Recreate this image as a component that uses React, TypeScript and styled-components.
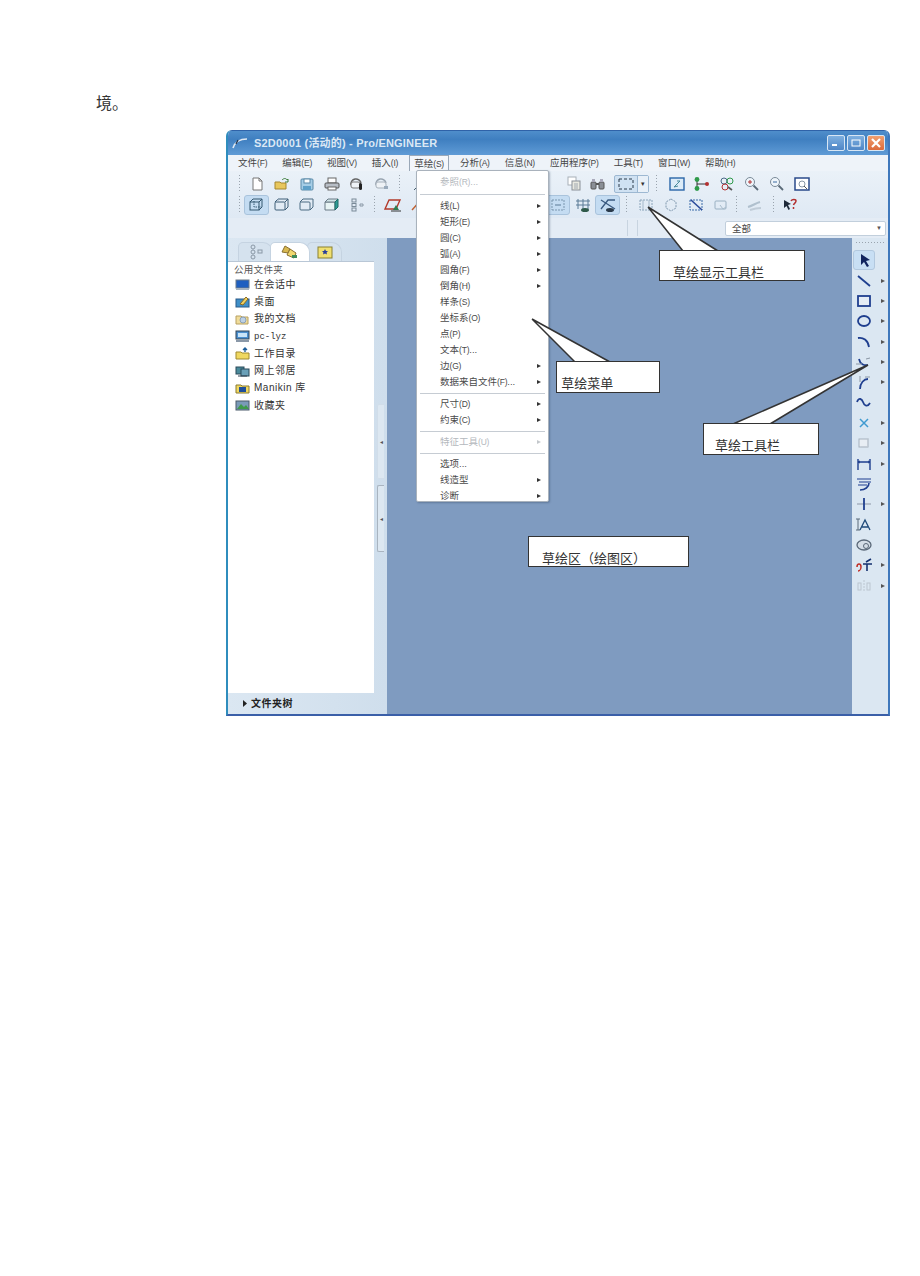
import React from "react";
import styled, { createGlobalStyle, css } from "styled-components";

const CJK = `"Liberation Sans", "Noto Sans CJK SC", sans-serif`;
const SERIF = `"Liberation Serif", "Noto Sans CJK SC", serif`;

const Global = createGlobalStyle`
  html, body { margin: 0; padding: 0; background: #fff; }
  body { font-family: ${SERIF}; color: #222; }
`;

const Page = styled.div`
  width: 920px;
  height: 1276px;
  padding-top: 94px;
  box-sizing: border-box;
  overflow: hidden;
`;

const Paragraph = styled.p`
  margin: 0 0 17px 96px;
  height: 19px;
  font: 16px/19px ${SERIF};
  color: #333;
`;

const Figure = styled.div`
  position: relative;
  margin-left: 226px;
  width: 664px;
  height: 586px;
`;

const Window = styled.div`
  width: 100%;
  height: 100%;
  box-sizing: border-box;
  display: flex;
  flex-direction: column;
  border: 2px solid #3f78bc;
  border-top: 0;
  border-bottom-color: #3a5fa8;
  border-left-color: #2f8dbd;
  border-radius: 6px 6px 0 0;
  background: #dfe9f4;
  overflow: hidden;
`;

const TitleBar = styled.div`
  height: 25px;
  flex: none;
  display: flex;
  align-items: center;
  padding: 0 3px 0 4px;
  background: linear-gradient(#4f8ecb 0%, #3f7fc0 35%, #5f9bd6 100%);
  border-top: 1px solid #2f62a8;
  box-sizing: border-box;
`;

const TitleText = styled.span`
  margin-left: 4px;
  flex: 1;
  font: bold 11px/14px ${CJK};
  color: #dbe8f5;
  letter-spacing: 0.2px;
`;

const Controls = styled.div`
  display: flex;
  gap: 2px;
`;

const Control = styled.div<{ $close?: boolean }>`
  width: 18px;
  height: 16px;
  box-sizing: border-box;
  border: 1px solid #d8e6f4;
  border-radius: 2px;
  display: flex;
  align-items: center;
  justify-content: center;
  background: ${(p) =>
    p.$close
      ? "linear-gradient(#f0a070, #dc6a3a)"
      : "linear-gradient(#7fb0e0, #4f86c6)"};
`;

const MenuBar = styled.div`
  height: 16px;
  flex: none;
  display: flex;
  gap: 15px;
  padding-left: 10px;
  box-sizing: border-box;
  background: #eef3f9;
  font: 9.5px/16px ${CJK};
  color: #444;
`;

const MenuTitle = styled.span<{ $open?: boolean }>`
  white-space: nowrap;
  ${(p) =>
    p.$open &&
    css`
      margin: 0 -4px;
      padding: 0 4px;
      background: #f4f7fb;
      border: 1px solid #9aa8b8;
      border-bottom: 0;
      line-height: 15px;
      box-sizing: border-box;
      height: 16px;
    `}
`;

const Mnemonic = styled.span`
  font-size: 8.5px;
  letter-spacing: -0.2px;
`;

const Toolbars = styled.div`
  height: 47px;
  flex: none;
  display: flex;
  flex-direction: column;
  background: linear-gradient(#eaf1f8, #dfe9f4);
  padding-top: 2px;
  box-sizing: border-box;
`;

const ToolRow = styled.div`
  height: 21px;
  display: flex;
  align-items: center;
  padding-left: 7px;
`;

const Grip = styled.div<{ $gap?: number }>`
  width: 3px;
  height: 19px;
  flex: none;
  margin: 0 ${(p) => p.$gap ?? 4}px;
  background-image: radial-gradient(circle, #9aa4ae 0.8px, transparent 1px);
  background-size: 3px 3px;
`;

const ToolSlot = styled.div<{ $w?: number; $active?: boolean; $dim?: boolean }>`
  width: ${(p) => p.$w ?? 25}px;
  height: 20px;
  flex: none;
  box-sizing: border-box;
  display: flex;
  align-items: center;
  justify-content: center;
  opacity: ${(p) => (p.$dim ? 0.45 : 1)};
  ${(p) =>
    p.$active &&
    css`
      background: #c4dcf2;
      border: 1px solid #a9c3dc;
      border-radius: 3px;
    `}
`;

const Spacer = styled.div<{ $w: number }>`
  width: ${(p) => p.$w}px;
  flex: none;
`;

const SelectGroup = styled.div`
  width: 35px;
  height: 18px;
  flex: none;
  display: flex;
  box-sizing: border-box;
  border: 1px solid #9db8d2;
  background: #cfe1f2;
  border-radius: 2px;
  margin-left: 4px;
`;

const SelectFace = styled.div`
  flex: 1;
  display: flex;
  align-items: center;
  justify-content: center;
`;

const SelectDrop = styled.div`
  width: 10px;
  border-left: 1px solid #9db8d2;
  background: #e8f0f8;
  color: #333;
  font: 7px/16px ${CJK};
  text-align: center;
`;

const FilterRow = styled.div`
  height: 20px;
  flex: none;
  display: flex;
  align-items: center;
  background: #e4ecf5;
  box-sizing: border-box;
  padding-left: 399px;
`;

const FilterRule = styled.div<{ $gap: number }>`
  width: 1px;
  height: 16px;
  background: #c8d4e0;
  margin-right: ${(p) => p.$gap}px;
`;

const Combo = styled.div`
  width: 161px;
  height: 15px;
  box-sizing: border-box;
  display: flex;
  justify-content: space-between;
  align-items: center;
  padding: 0 3px 0 6px;
  border: 1px solid #c2cfdc;
  border-radius: 2px;
  background: #fff;
  font: 9.5px/13px ${CJK};
  color: #444;
`;

const Caret = styled.span`
  font-size: 6px;
  color: #555;
`;

const Workspace = styled.div`
  flex: 1;
  min-height: 0;
  display: flex;
`;

const Navigator = styled.div`
  width: 159px;
  flex: none;
  display: flex;
  flex-direction: column;
  background: linear-gradient(90deg, #dbe7f2, #cfdeec);
`;

const Tabs = styled.div`
  height: 23px;
  flex: none;
  display: flex;
  align-items: flex-end;
  padding: 0 0 0 10px;
  gap: 0;
`;

const Tab = styled.div<{ $active?: boolean }>`
  width: ${(p) => (p.$active ? 40 : 35)}px;
  height: 19px;
  box-sizing: border-box;
  display: flex;
  align-items: center;
  justify-content: center;
  border-radius: 5px 10px 0 0;
  border: 1px solid #c5d3e1;
  border-bottom: 0;
  background: ${(p) => (p.$active ? "#fff" : "#d5e2ee")};
  margin-right: -3px;
  position: relative;
  z-index: ${(p) => (p.$active ? 1 : 0)};
`;

const NavBody = styled.div`
  flex: 1;
  min-height: 0;
  display: flex;
`;

const FolderList = styled.div`
  width: 146px;
  margin-left: 0;
  flex: none;
  background: #fff;
  border-top: 1px solid #b9c7d6;
  border-right: 0;
  box-sizing: border-box;
  padding: 1px 0 0 6px;
`;

const FolderHeader = styled.div`
  height: 13px;
  font: 9.5px/13px ${CJK};
  color: #555;
  letter-spacing: 0.3px;
`;

const FolderRow = styled.div`
  height: 17.3px;
  display: flex;
  align-items: center;
  gap: 4px;
  padding-left: 1px;
  font: 10px/14px ${CJK};
  color: #333;
  letter-spacing: 0.5px;
  white-space: nowrap;
`;

const MonoLabel = styled.span`
  font: 9px/14px "Liberation Mono", "Noto Sans CJK SC", monospace;
  letter-spacing: 0;
`;

const Sash = styled.div`
  width: 13px;
  flex: none;
  display: flex;
  flex-direction: column;
  align-items: center;
  padding-top: 143px;
  box-sizing: border-box;
`;

const SashGrip = styled.div<{ $h: number; $mb?: number; $border?: boolean }>`
  width: 7px;
  height: ${(p) => p.$h}px;
  margin-bottom: ${(p) => p.$mb ?? 0}px;
  flex: none;
  display: flex;
  align-items: center;
  justify-content: center;
  box-sizing: border-box;
  color: #555;
  font-size: 6px;
  line-height: 6px;
  background: #dce7f1;
  border: 1px solid ${(p) => (p.$border ? "#a9b4c0" : "#d1dde9")};
  border-right: 0;
  border-radius: 2px 0 0 2px;
`;

const TreeToggle = styled.div`
  height: 21px;
  flex: none;
  display: flex;
  align-items: center;
  padding-left: 14px;
  gap: 3px;
  font: bold 10px/14px ${CJK};
  color: #222;
  letter-spacing: 0.5px;
`;

const Canvas = styled.div`
  flex: 1;
  background: #7f9bc0;
`;

const SketchTools = styled.div`
  width: 36px;
  flex: none;
  background: #dbe7f2;
  padding: 3px 0 0 1px;
  box-sizing: border-box;
`;

const DottedRule = styled.div`
  height: 3px;
  margin: 0 2px 6px;
  background-image: radial-gradient(circle, #9aa4ae 0.7px, transparent 1px);
  background-size: 3px 3px;
`;

const SketchRow = styled.div`
  height: 20.35px;
  display: flex;
  align-items: center;
`;

const SketchBtn = styled.div<{ $active?: boolean }>`
  width: 22px;
  height: 20px;
  box-sizing: border-box;
  display: flex;
  align-items: center;
  justify-content: center;
  ${(p) =>
    p.$active &&
    css`
      background: #c8dff4;
      border: 1px solid #b2c8de;
      border-radius: 3px;
    `}
`;

const Flyout = styled.span`
  margin-left: 6px;
  width: 0;
  height: 0;
  border-left: 4px solid #555;
  border-top: 2.5px solid transparent;
  border-bottom: 2.5px solid transparent;
`;

const DropMenu = styled.div`
  position: absolute;
  left: 190px;
  top: 40px;
  width: 133px;
  height: 332px;
  box-sizing: border-box;
  padding: 3px 0 0;
  background: #fff;
  border: 1px solid #a9b2bc;
  border-radius: 2px;
  box-shadow: 1px 1px 2px rgba(40, 60, 90, 0.35);
`;

const DropItem = styled.div<{ $dim?: boolean }>`
  height: 16px;
  display: flex;
  align-items: center;
  justify-content: space-between;
  padding: 0 7px 0 23px;
  font: 9.5px/16px ${CJK};
  color: ${(p) => (p.$dim ? "#b4b8bd" : "#4a4a4a")};
  white-space: nowrap;
`;

const DropArrow = styled.span<{ $dim?: boolean }>`
  width: 0;
  height: 0;
  border-left: 4px solid ${(p) => (p.$dim ? "#c4c8cc" : "#333")};
  border-top: 2.5px solid transparent;
  border-bottom: 2.5px solid transparent;
`;

const DropRule = styled.div<{ $h?: number }>`
  height: ${(p) => p.$h ?? 8}px;
  display: flex;
  align-items: center;
  padding: 0 3px;
  &::after {
    content: "";
    flex: 1;
    height: 1px;
    background: #c6ccd3;
  }
`;

const Leaders = styled.svg`
  position: absolute;
  inset: 0;
  pointer-events: none;
`;

const Callout = styled.div<{
  $x: number;
  $y: number;
  $w: number;
  $h: number;
  $pad: number;
}>`
  position: absolute;
  left: ${(p) => p.$x}px;
  top: ${(p) => p.$y}px;
  width: ${(p) => p.$w}px;
  height: ${(p) => p.$h}px;
  box-sizing: border-box;
  padding: 14px 0 0 ${(p) => p.$pad}px;
  background: #fff;
  border: 1.5px solid #333;
  font: 13px/15px ${SERIF};
  color: #333;
  white-space: nowrap;
`;

type IconName =
  | "new" | "open" | "save" | "print" | "mail" | "mail2"
  | "box1" | "box2" | "box3" | "box4" | "axes"
  | "sketch1" | "sketch2" | "pen" | "copy" | "find"
  | "dash" | "refit" | "node" | "zoomAll" | "zoomIn" | "zoomOut" | "frame"
  | "grid" | "gridDim" | "constraint" | "vertex" | "hex" | "diag" | "cube" | "sweep" | "help";

const Ico: React.FC<{ name: IconName }> = ({ name }) => {
  const common = { width: 18, height: 16, viewBox: "0 0 18 16", fill: "none" } as const;
  switch (name) {
    case "new":
      return <svg {...common}><path d="M5 2h6l3 3v9H5z" fill="#fff" stroke="#777" /><path d="M11 2v3h3" stroke="#777" /></svg>;
    case "open":
      return <svg {...common}><path d="M2 13V6h5l1 1h5v6z" fill="#e8c75c" stroke="#a5862e" /><path d="M9 4c2-2 4-2 5 0l1-1v3h-3" stroke="#3d7d3a" /></svg>;
    case "save":
      return <svg {...common}><rect x="3" y="3" width="12" height="11" rx="1" fill="#a6cde6" stroke="#5a8aa8" /><rect x="6" y="3" width="6" height="4" fill="#fff" stroke="#5a8aa8" /><rect x="5" y="10" width="8" height="4" fill="#5fa0c8" /></svg>;
    case "print":
      return <svg {...common}><rect x="5" y="2" width="8" height="5" fill="#fff" stroke="#666" /><rect x="2" y="7" width="14" height="5" rx="1" fill="#b8bec6" stroke="#555" /><rect x="5" y="11" width="8" height="3" fill="#fff" stroke="#666" /></svg>;
    case "mail":
      return <svg {...common}><path d="M3 9a5 5 0 0 1 10-2" stroke="#666" strokeWidth="1.5" /><rect x="3" y="6" width="9" height="6" rx="2" stroke="#777" fill="#eef2f6" /><rect x="11" y="7" width="3" height="7" rx="1.5" fill="#222" /></svg>;
    case "mail2":
      return <svg {...common}><path d="M3 9a5 5 0 0 1 10-2" stroke="#98a4b0" strokeWidth="1.5" /><rect x="3" y="6" width="10" height="6" rx="2" stroke="#a6b0ba" fill="#eef2f6" /><rect x="11" y="10" width="4" height="3" fill="#9ab" /></svg>;
    case "box1":
      return <svg {...common}><rect x="2" y="5" width="9" height="8" stroke="#33566f" /><path d="M2 5l3-3h9v8l-3 3M11 5l3-3" stroke="#33566f" /><path d="M6 4v6h7" stroke="#33566f" strokeDasharray="1.5 1" /></svg>;
    case "box2":
      return <svg {...common}><rect x="2" y="5" width="10" height="8" rx="1" stroke="#3f5f78" /><path d="M2 5l3-3h10v8l-3 3M12 5l3-3" stroke="#3f5f78" /><path d="M5 2v2" stroke="#9ab" /></svg>;
    case "box3":
      return <svg {...common}><rect x="2" y="5" width="10" height="8" rx="1" stroke="#4a6a82" /><path d="M2 5l3-3h10v8l-3 3" stroke="#4a6a82" /></svg>;
    case "box4":
      return <svg {...common}><path d="M2 5h10v8H2z" fill="#e8f4f4" stroke="#6a7a86" /><path d="M2 5l3-3h10l-3 3z" fill="#cfe3e6" stroke="#6a7a86" /><path d="M12 5l3-3v8l-3 3z" fill="#2f9c94" stroke="#1f6c66" /></svg>;
    case "axes":
      return <svg {...common}><rect x="4" y="2" width="4" height="3" stroke="#7a8a98" /><rect x="4" y="6.5" width="4" height="3" stroke="#7a8a98" /><rect x="4" y="11" width="4" height="3" stroke="#7a8a98" /><path d="M12 7h3v2h-3z" stroke="#8a98a6" /></svg>;
    case "sketch1":
      return <svg {...common}><path d="M1 12l4-9h11l-4 9z" stroke="#b33a2a" strokeWidth="1.4" /><path d="M9 13l3-5 3 5z" fill="#2f7d4f" /><path d="M7 14h10" stroke="#333" /></svg>;
    case "sketch2":
      return <svg {...common}><path d="M3 13L12 3" stroke="#c06030" strokeWidth="1.4" /><path d="M12 3l3 1-2 2z" fill="#8a4a20" /></svg>;
    case "pen":
      return <svg {...common}><path d="M3 14l11-11" stroke="#4a6070" /></svg>;
    case "copy":
      return <svg {...common}><rect x="3" y="1" width="8" height="8" fill="#fff" stroke="#a8b0b8" /><rect x="7" y="5" width="8" height="9" fill="#e8e8e0" stroke="#8a9098" /><path d="M9 8h4M9 10h4M9 12h4" stroke="#a0a8b0" /></svg>;
    case "find":
      return <svg {...common}><rect x="2" y="6" width="5" height="7" rx="1" fill="#8a8f96" stroke="#555" /><rect x="10" y="6" width="5" height="7" rx="1" fill="#8a8f96" stroke="#555" /><path d="M7 8h3" stroke="#555" strokeWidth="2" /><rect x="3" y="3" width="3" height="3" fill="#aab" /><rect x="11" y="3" width="3" height="3" fill="#aab" /></svg>;
    case "dash":
      return <svg {...common}><rect x="2" y="3" width="14" height="10" stroke="#2a3a4a" strokeDasharray="3 2" /></svg>;
    case "refit":
      return <svg {...common}><rect x="2" y="2" width="14" height="12" fill="#dcecf8" stroke="#2a66a8" strokeWidth="1.4" /><path d="M6 11l6-6M6 11l4-1M12 5l-3 0" stroke="#4a8a9a" /></svg>;
    case "node":
      return <svg {...common}><path d="M4 4v8M4 8h9" stroke="#333" /><circle cx="4" cy="3.5" r="2.4" fill="#2f9a4a" /><circle cx="4" cy="12.5" r="2.4" fill="#2f9a4a" /><circle cx="14" cy="8" r="2" fill="#b33030" /></svg>;
    case "zoomAll":
      return <svg {...common}><circle cx="6" cy="5" r="3" stroke="#4a6a88" /><circle cx="12" cy="5" r="3" stroke="#2f9a4a" /><circle cx="7" cy="11" r="3" stroke="#b33030" /><path d="M10 11l4 3" stroke="#555" strokeWidth="1.6" /></svg>;
    case "zoomIn":
      return <svg {...common}><circle cx="7" cy="6" r="4.5" fill="#eef5fb" stroke="#7a8a98" /><path d="M5 6h4M7 4v4" stroke="#b03030" /><path d="M10.5 9.5L15 14" stroke="#5a6a78" strokeWidth="1.8" /></svg>;
    case "zoomOut":
      return <svg {...common}><circle cx="7" cy="6" r="4.5" fill="#eef5fb" stroke="#7a8a98" /><path d="M5 6h4" stroke="#3a6aa0" /><path d="M10.5 9.5L15 14" stroke="#5a6a78" strokeWidth="1.8" /></svg>;
    case "frame":
      return <svg {...common}><rect x="2" y="2" width="14" height="12" fill="#fff" stroke="#2a4a8a" strokeWidth="1.5" /><circle cx="9" cy="8" r="3" stroke="#8a98a6" /><path d="M11 10l3 3" stroke="#555" /></svg>;
    case "grid":
      return <svg {...common}><path d="M4 2v10M9 2v10M14 2v10M2 4h14M2 8h14" stroke="#5a7a96" /><ellipse cx="11" cy="13" rx="4" ry="2" fill="#2f5a4a" /></svg>;
    case "gridDim":
      return <svg {...common}><path d="M2 3l14 9M2 12L9 3h7" stroke="#3a5a80" strokeWidth="1.3" /><ellipse cx="11" cy="13" rx="4" ry="2" fill="#2a3a4a" /></svg>;
    case "constraint":
      return <svg {...common}><path d="M3 3l12 0M3 13h12M3 3v10M15 3v10" stroke="#7a96ae" strokeDasharray="2 1" /><path d="M6 8h6" stroke="#5a7a96" /></svg>;
    case "vertex":
      return <svg {...common}><path d="M3 3h12v10H3z" stroke="#8aa4ba" strokeDasharray="2 1" /><path d="M6 3v10M12 3v10" stroke="#a4b8ca" /></svg>;
    case "hex":
      return <svg {...common}><path d="M9 2l5 3v6l-5 3-5-3V5z" stroke="#8098ae" strokeDasharray="2 1" /></svg>;
    case "diag":
      return <svg {...common}><path d="M3 3h12v10H3z" stroke="#3a6aa8" strokeDasharray="2 1" /><path d="M4 3l11 10" stroke="#2a4a9a" strokeWidth="1.6" /></svg>;
    case "cube":
      return <svg {...common}><rect x="3" y="4" width="11" height="8" rx="1" stroke="#9ab0c2" /><path d="M8 8l3 4 3-2" stroke="#a8bccc" /></svg>;
    case "sweep":
      return <svg {...common}><path d="M2 10c4-1 8-4 12-5" stroke="#b0c0ce" strokeWidth="2" /><path d="M4 13c3-1 8-2 11-2" stroke="#c0ccd8" strokeWidth="2" /></svg>;
    case "help":
      return <svg {...common}><path d="M3 3l7 4-3 1 2 4-1.5 1-2-4L3 11z" fill="#1f2a3a" /><path d="M10 4c1-2 5-2 5 0 0 2-2 2-2.5 4M12.5 10v2" stroke="#b33030" strokeWidth="1.5" /></svg>;
  }
};

type Tool = { icon: IconName; active?: boolean; dim?: boolean; w?: number };

const Row: React.FC<{ tools: Tool[] }> = ({ tools }) => (
  <>
    {tools.map((t, i) => (
      <ToolSlot key={i} $active={t.active} $dim={t.dim} $w={t.w}>
        <Ico name={t.icon} />
      </ToolSlot>
    ))}
  </>
);

const menus: [string, string][] = [
  ["文件", "(F)"], ["编辑", "(E)"], ["视图", "(V)"], ["插入", "(I)"], ["草绘", "(S)"], ["分析", "(A)"],
  ["信息", "(N)"], ["应用程序", "(P)"], ["工具", "(T)"], ["窗口", "(W)"], ["帮助", "(H)"],
];

type Drop =
  | { rule: true; h?: number }
  | { label: string; key?: string; suffix?: string; sub?: boolean; dim?: boolean };

const sketchMenu: Drop[] = [
  { label: "参照", key: "R", suffix: "...", dim: true },
  { rule: true, h: 8 },
  { label: "线", key: "L", sub: true },
  { label: "矩形", key: "E", sub: true },
  { label: "圆", key: "C", sub: true },
  { label: "弧", key: "A", sub: true },
  { label: "圆角", key: "F", sub: true },
  { label: "倒角", key: "H", sub: true },
  { label: "样条", key: "S" },
  { label: "坐标系", key: "O" },
  { label: "点", key: "P" },
  { label: "文本", key: "T", suffix: "..." },
  { label: "边", key: "G", sub: true },
  { label: "数据来自文件", key: "F", suffix: "...", sub: true },
  { rule: true, h: 6 },
  { label: "尺寸", key: "D", sub: true },
  { label: "约束", key: "C", sub: true },
  { rule: true, h: 6 },
  { label: "特征工具", key: "U", sub: true, dim: true },
  { rule: true, h: 6 },
  { label: "选项..." },
  { label: "线造型", sub: true },
  { label: "诊断", sub: true },
];

const FolderIcon: React.FC<{ kind: number }> = ({ kind }) => {
  const p = { width: 15, height: 13, viewBox: "0 0 15 13", fill: "none" } as const;
  switch (kind) {
    case 0:
      return <svg {...p}><rect x="1" y="2" width="13" height="8" fill="#1f5fc0" stroke="#6a7a8a" /><rect x="1" y="10" width="13" height="2" fill="#a8b4c0" /></svg>;
    case 1:
      return <svg {...p}><rect x="1" y="4" width="13" height="8" fill="#3f8fc8" stroke="#2a5a88" /><path d="M5 9l6-7 2 2-5 6z" fill="#f0d060" stroke="#8a6a20" /></svg>;
    case 2:
      return <svg {...p}><path d="M1 11V3h5l1 1h6v7z" fill="#f0dc9a" stroke="#b8a060" /><circle cx="8" cy="7" r="3" fill="#bcd0e4" stroke="#8aa0b8" /></svg>;
    case 3:
      return <svg {...p}><rect x="1" y="1" width="13" height="8" fill="#4a8fd0" stroke="#345" /><rect x="3" y="3" width="9" height="4" fill="#c8e4f8" /><rect x="1" y="10" width="13" height="2" fill="#8a98a8" /></svg>;
    case 4:
      return <svg {...p}><path d="M1 12V5h5l1 1h7v6z" fill="#f0d860" stroke="#a08a30" /><path d="M10 5V1M8 3l2-2 2 2" stroke="#1f5f9a" strokeWidth="1.4" /></svg>;
    case 5:
      return <svg {...p}><rect x="1" y="2" width="8" height="7" fill="#4a8a9a" stroke="#2a4a5a" /><rect x="6" y="4" width="8" height="7" fill="#6aa0b8" stroke="#2a4a5a" /><path d="M3 11h9" stroke="#345" /></svg>;
    case 6:
      return <svg {...p}><path d="M1 11V3h5l1 1h7v7z" fill="#f0d860" stroke="#8a7a30" /><rect x="4" y="5" width="7" height="5" fill="#1f4f9a" /></svg>;
    default:
      return <svg {...p}><rect x="1" y="2" width="13" height="9" fill="#7a9ab8" stroke="#4a5a6a" /><path d="M2 10l4-5 3 3 2-2 3 4z" fill="#3f9a4a" /></svg>;
  }
};

const folders = ["在会话中", "桌面", "我的文档", "pc-lyz", "工作目录", "网上邻居", "Manikin 库", "收藏夹"];

type SketchTool = { d: React.ReactNode; fly?: boolean; active?: boolean };
const blue = "#1f3f8f";
const sketchTools: SketchTool[] = [
  { active: true, d: <path d="M5 2l0 11 3-3 3 5 2-1-3-5 4-1z" fill="#10245f" /> },
  { fly: true, d: <path d="M2 3l12 10" stroke={blue} strokeWidth="1.8" /> },
  { fly: true, d: <rect x="2" y="3" width="12" height="10" stroke={blue} strokeWidth="1.8" fill="#e4ecf5" /> },
  { fly: true, d: <ellipse cx="8" cy="8" rx="6" ry="5" stroke={blue} strokeWidth="1.8" /> },
  { fly: true, d: <path d="M2 4c5-1 10 2 11 9" stroke={blue} strokeWidth="1.8" /> },
  { fly: true, d: <><path d="M3 5c1 5 5 7 9 6" stroke={blue} strokeWidth="1.8" /><path d="M0 10h6M10 5l4-1" stroke="#8a96a4" /></> },
  { fly: true, d: <><path d="M4 15c0-6 4-10 8-10" stroke={blue} strokeWidth="1.8" /><path d="M4 2v6M9 3h5" stroke="#8a96a4" /></> },
  { d: <path d="M1 7c2-5 5-3 6 0s4 6 7 1" stroke={blue} strokeWidth="1.8" /> },
  { fly: true, d: <><path d="M4 4l8 8M12 4l-8 8" stroke="#3f9ad0" strokeWidth="1.5" /></> },
  { fly: true, d: <><rect x="3" y="4" width="9" height="8" stroke="#a6b2be" fill="#e8eef4" /><path d="M12 3v9H5" stroke="#c0cad4" /></> },
  { fly: true, d: <><path d="M2 3v11M14 3v11M2 6h12" stroke={blue} strokeWidth="1.4" /><path d="M4 5l-2 1 2 1M12 5l2 1-2 1" stroke={blue} /></> },
  { d: <><path d="M1 3h14M3 6h12M2 9h9" stroke={blue} strokeWidth="1.2" /><path d="M13 7c0 4-4 7-9 7" stroke={blue} strokeWidth="1.6" /></> },
  { fly: true, d: <><path d="M1 8h14" stroke="#9aa6b4" strokeWidth="1.2" /><path d="M8 2v12" stroke={blue} strokeWidth="1.8" /></> },
  { d: <><path d="M2 2v11M0 2h4M0 13h4" stroke="#5a6a7a" /><path d="M4 13L9 3l5 10M6 10h6" stroke="#1f4a7a" strokeWidth="1.3" /></> },
  { d: <><ellipse cx="8" cy="8" rx="7" ry="5" stroke="#5a6878" fill="#d4dde6" strokeWidth="1.3" /><circle cx="10" cy="9" r="2.5" stroke="#5a6878" /></> },
  { fly: true, d: <><path d="M1 10c0-4 4-4 4 0s-3 4-3 4" stroke="#c03028" strokeWidth="1.5" /><path d="M7 7h9M11 7v7M10 5l5-3" stroke="#14306f" strokeWidth="1.6" /></> },
  { fly: true, d: <><rect x="2" y="5" width="3" height="7" stroke="#bcc6d0" /><rect x="11" y="5" width="3" height="7" stroke="#bcc6d0" /><path d="M8 2v12" stroke="#bcc6d0" strokeDasharray="2 1" /></> },
];

export default function App() {
  return (
    <Page>
      <Global />
      <Paragraph>境。</Paragraph>
      <Figure>
        <Window>
          <TitleBar>
            <svg width="18" height="14" viewBox="0 0 18 14" fill="none">
              <path d="M1 12C3 6 8 3 15 3" stroke="#dfe8f2" strokeWidth="1.6" />
              <path d="M4 8l2-4" stroke="#20304a" strokeWidth="1.2" />
            </svg>
            <TitleText>S2D0001 (活动的) - Pro/ENGINEER</TitleText>
            <Controls>
              <Control>
                <svg width="10" height="8" viewBox="0 0 10 8"><rect x="1" y="5" width="5" height="2" fill="#fff" /></svg>
              </Control>
              <Control>
                <svg width="10" height="8" viewBox="0 0 10 8" fill="none"><rect x="1" y="1" width="8" height="6" stroke="#fff" /></svg>
              </Control>
              <Control $close>
                <svg width="10" height="10" viewBox="0 0 10 10"><path d="M1 1l8 8M9 1l-8 8" stroke="#fff" strokeWidth="2.2" /></svg>
              </Control>
            </Controls>
          </TitleBar>

          <MenuBar>
            {menus.map(([label, key]) => (
              <MenuTitle key={label} $open={label === "草绘"}>
                {label}
                <Mnemonic>{key}</Mnemonic>
              </MenuTitle>
            ))}
          </MenuBar>

          <Toolbars>
            <ToolRow>
              <Grip $gap={3} />
              <Row tools={[{ icon: "new" }, { icon: "open" }, { icon: "save" }, { icon: "print" }, { icon: "mail" }, { icon: "mail2" }]} />
              <Grip />
              <Spacer $w={2} />
              <Row tools={[{ icon: "pen" }]} />
              <Spacer $w={129} />
              <Row tools={[{ icon: "copy" }, { icon: "find", w: 24 }]} />
              <SelectGroup>
                <SelectFace><Ico name="dash" /></SelectFace>
                <SelectDrop>▾</SelectDrop>
              </SelectGroup>
              <Grip $gap={6} />
              <Row tools={[{ icon: "refit" }, { icon: "node" }, { icon: "zoomAll" }, { icon: "zoomIn" }, { icon: "zoomOut" }, { icon: "frame" }]} />
            </ToolRow>
            <ToolRow>
              <Grip $gap={3} />
              <Row tools={[{ icon: "box1", active: true }, { icon: "box2" }, { icon: "box3" }, { icon: "box4" }, { icon: "axes" }]} />
              <Grip />
              <Spacer $w={0} />
              <Row tools={[{ icon: "sketch1" }, { icon: "sketch2" }]} />
              <Spacer $w={115} />
              <Row tools={[{ icon: "constraint", active: true }, { icon: "grid" }, { icon: "gridDim", active: true }]} />
              <Grip $gap={5} />
              <Row tools={[{ icon: "vertex", dim: false }, { icon: "hex" }, { icon: "diag" }, { icon: "cube" }]} />
              <Grip $gap={2} />
              <Row tools={[{ icon: "sweep", w: 30 }]} />
              <Grip $gap={2} />
              <Row tools={[{ icon: "help" }]} />
            </ToolRow>
          </Toolbars>

          <FilterRow>
            <FilterRule $gap={9} />
            <FilterRule $gap={87} />
            <Combo>
              全部
              <Caret>▼</Caret>
            </Combo>
          </FilterRow>

          <Workspace>
            <Navigator>
              <Tabs>
                <Tab>
                  <svg width="22" height="16" viewBox="0 0 22 16" fill="none">
                    <circle cx="8" cy="3" r="2" stroke="#8a98a6" />
                    <circle cx="8" cy="8" r="2" stroke="#8a98a6" />
                    <circle cx="8" cy="13" r="2" stroke="#8a98a6" />
                    <rect x="13" y="6" width="4" height="3" stroke="#8a98a6" />
                  </svg>
                </Tab>
                <Tab $active>
                  <svg width="20" height="16" viewBox="0 0 20 16">
                    <path d="M2 8l3-6 5 3-2 4z" fill="#d8b850" stroke="#8a7030" />
                    <path d="M7 11l3-6 6 4-2 5z" fill="#f0d870" stroke="#8a7030" />
                    <rect x="12" y="11" width="5" height="3" fill="#3f8a5a" />
                  </svg>
                </Tab>
                <Tab>
                  <svg width="18" height="14" viewBox="0 0 18 14">
                    <rect x="2" y="2" width="14" height="11" fill="#f0e070" stroke="#8a8030" />
                    <path d="M9 4l1 2 2 0-1.500 1.500.5 2-2-1-2 1 .5-2L6 6l2 0z" fill="#2a3f9a" />
                  </svg>
                </Tab>
              </Tabs>
              <NavBody>
                <FolderList>
                  <FolderHeader>公用文件夹</FolderHeader>
                  {folders.map((name, i) => (
                    <FolderRow key={name}>
                      <FolderIcon kind={i} />
                      {name === "pc-lyz" ? <MonoLabel>{name}</MonoLabel> : name}
                    </FolderRow>
                  ))}
                </FolderList>
                <Sash>
                  <SashGrip $h={75} $mb={6}>◂</SashGrip>
                  <SashGrip $h={67} $border>◂</SashGrip>
                </Sash>
              </NavBody>
              <TreeToggle>
                <svg width="6" height="7" viewBox="0 0 6 7"><path d="M1 0l4 3.500-4 3.500z" fill="#222" /></svg>
                文件夹树
              </TreeToggle>
            </Navigator>
            <Canvas />
            <SketchTools>
              <DottedRule />
              {sketchTools.map((t, i) => (
                <SketchRow key={i}>
                  <SketchBtn $active={t.active}>
                    <svg width="16" height="16" viewBox="0 0 16 16" fill="none">{t.d}</svg>
                  </SketchBtn>
                  {t.fly && <Flyout />}
                </SketchRow>
              ))}
            </SketchTools>
          </Workspace>
        </Window>

        <DropMenu>
          {sketchMenu.map((m, i) =>
            "rule" in m ? (
              <DropRule key={i} $h={m.h} />
            ) : (
              <DropItem key={i} $dim={m.dim}>
                <span>
                  {m.label}
                  {m.key && <Mnemonic>({m.key})</Mnemonic>}
                  {m.suffix}
                </span>
                {m.sub && <DropArrow $dim={m.dim} />}
              </DropItem>
            )
          )}
        </DropMenu>

        <Leaders width="664" height="586" viewBox="0 0 664 586">
          <path d="M422 77L457 121H492z" fill="#fff" />
          <path d="M422 77L457 121M422 77L492 121" stroke="#333" strokeWidth="1.5" fill="none" />
          <path d="M306 189L349 232H384z" fill="#fff" />
          <path d="M306 189L349 232M306 189L384 232" stroke="#333" strokeWidth="1.5" fill="none" />
          <path d="M642 235L507 294H544z" fill="#fff" />
          <path d="M642 235L507 294M642 235L544 294" stroke="#333" strokeWidth="1.5" fill="none" />
        </Leaders>

        <Callout $x={433} $y={120} $w={146} $h={31} $pad={13}>草绘显示工具栏</Callout>
        <Callout $x={330} $y={231} $w={104} $h={32} $pad={1}>&nbsp;草绘菜单</Callout>
        <Callout $x={477} $y={293} $w={116} $h={32} $pad={11}>草绘工具栏</Callout>
        <Callout $x={302} $y={406} $w={161} $h={31} $pad={13}>草绘区（绘图区）</Callout>
      </Figure>
    </Page>
  );
}
